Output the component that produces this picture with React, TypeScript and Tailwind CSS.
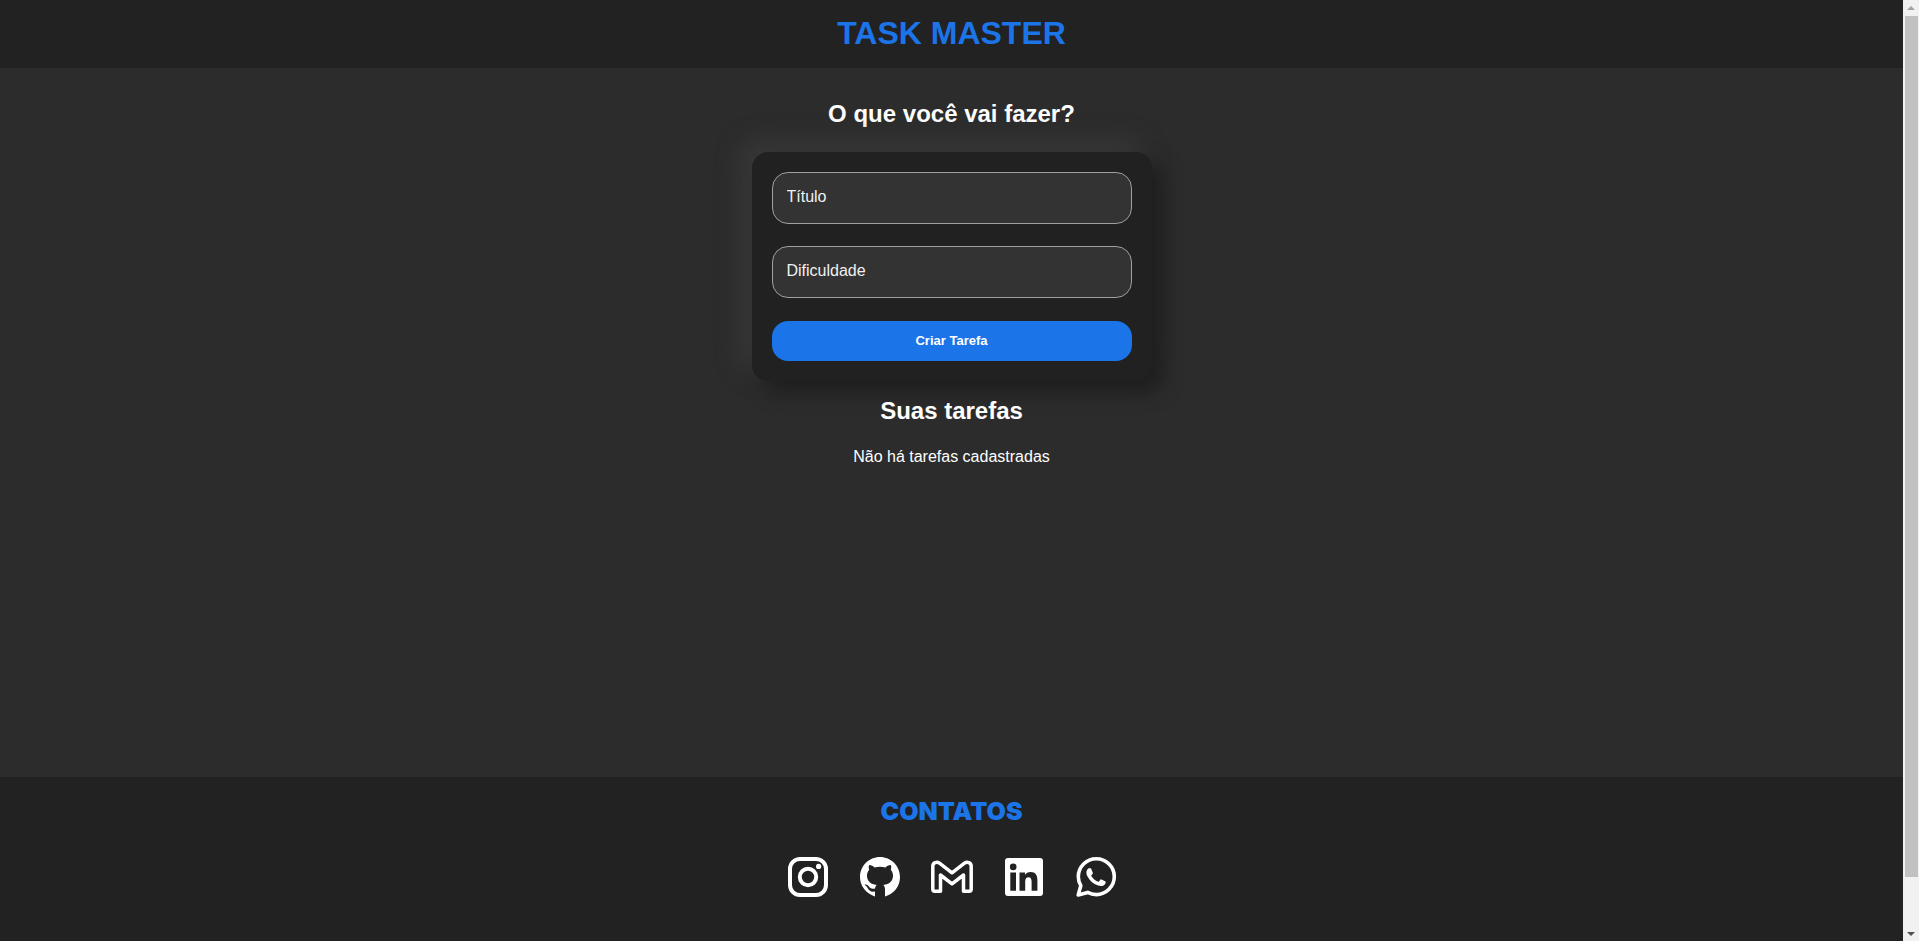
import { useState } from "react";
import type { FormEvent, ReactNode } from "react";

function Icon({ children }: { children: ReactNode }) {
  return (
    <svg viewBox="0 0 48 48" className="size-12" fill="none" aria-hidden="true">
      {children}
    </svg>
  );
}

const contacts = [
  {
    name: "Instagram",
    icon: (
      <Icon>
        <rect x="6" y="6" width="36" height="36" rx="10" stroke="currentColor" strokeWidth="4" />
        <circle cx="24" cy="24" r="8.200" stroke="currentColor" strokeWidth="4" />
        <circle cx="34.600" cy="13.400" r="2.600" fill="currentColor" />
      </Icon>
    ),
  },
  {
    name: "GitHub",
    icon: (
      <Icon>
        <path
          fill="currentColor"
          d="M24 4C12.950 4 4 12.950 4 24C4 32.900 9.700 40.300 18.800 43.400L19 43.400V38.600C14.500 39.200 12.900 37.200 11.700 35C10.900 33.500 9.600 32.600 8.600 31.800C9.900 31 11.700 31.800 12.700 33.200C14 35.100 15.400 36.300 19.100 35.500C19.200 34 19.800 32.700 20.700 32C14.500 31.200 11 28.300 11 22.500C11 20.300 11.800 18.300 13.200 16.700C12.600 15.200 12.600 13.400 13.200 12C15.500 12 17.200 13.200 18.500 14.400C22 13.400 26 13.400 29.500 14.400C30.800 13.200 32.500 12 34.800 12C35.400 13.400 35.400 15.200 34.800 16.700C36.200 18.300 37 20.300 37 22.500C37 28.300 33.500 31.200 27.300 32C28.400 33 29 34.600 29 36.300V43.400C37.700 41.200 44 33.400 44 24C44 12.950 35.050 4 24 4Z"
        />
      </Icon>
    ),
  },
  {
    name: "Gmail",
    icon: (
      <Icon>
        <path
          stroke="currentColor"
          strokeWidth="3.500"
          strokeLinejoin="round"
          d="M4.800 36V13.200C4.800 9.500 8.800 8.200 11.500 10.200L24 19.800L36.500 10.200C39.200 8.200 43.200 9.500 43.200 13.200V36C43.200 37.400 42.500 38.200 41.200 38.200H35.500V22L24 30.800L12.500 22V38.200H6.800C5.500 38.200 4.800 37.400 4.800 36Z"
        />
      </Icon>
    ),
  },
  {
    name: "LinkedIn",
    icon: (
      <Icon>
        <path
          fill="currentColor"
          fillRule="evenodd"
          d="M8 5H40A3 3 0 0 1 43 8V40A3 3 0 0 1 40 43H8A3 3 0 0 1 5 40V8A3 3 0 0 1 8 5ZM13.200 10.600A3.300 3.300 0 1 0 13.200 17.200A3.300 3.300 0 1 0 13.200 10.600ZM10.300 19.500V37.800H16V19.500ZM19.500 19.500V37.800H25.200V28.500C25.200 26 26.200 24.300 28.500 24.300C30.900 24.300 31.600 26.200 31.600 28.700V37.800H37.400V27.500C37.400 22.300 35.600 19 30.600 19C28 19 26 20.200 25 22V19.500Z"
        />
      </Icon>
    ),
  },
  {
    name: "WhatsApp",
    icon: (
      <Icon>
        <path
          stroke="currentColor"
          strokeWidth="3.600"
          strokeLinejoin="round"
          d="M24.300 5.700C14.400 5.700 6.300 13.700 6.300 23.600C6.300 26.900 7.200 30 8.800 32.700L6.200 42L15.700 39.400C18.300 40.800 21.200 41.600 24.300 41.600C34.200 41.600 42.300 33.500 42.300 23.600C42.300 13.700 34.200 5.700 24.300 5.700Z"
        />
        <path
          fill="currentColor"
          d="M19.268 16.045c-.355-.79-.729-.806-1.068-.82-.277-.012-.593-.011-.909-.011s-.83.119-1.265.594c-.435.475-1.661 1.622-1.661 3.956s1.700 4.590 1.937 4.906c.237.316 3.282 5.259 8.104 7.161 4.007 1.580 4.823 1.266 5.693 1.187.870-.079 2.807-1.147 3.202-2.255.395-1.108.395-2.057.277-2.255-.119-.198-.435-.316-.909-.554s-2.807-1.385-3.242-1.543c-.435-.158-.751-.237-1.068.238-.316.474-1.225 1.543-1.502 1.859-.277.317-.554.357-1.028.119-.474-.238-2.002-.738-3.815-2.354-1.410-1.257-2.362-2.810-2.639-3.285-.277-.474-.030-.731.208-.968.213-.213.474-.554.712-.831.237-.277.316-.475.474-.791.158-.317.079-.594-.040-.831-.117-.238-1.039-2.584-1.461-3.522z"
        />
      </Icon>
    ),
  },
];

const fields = [
  { id: "title", label: "Título" },
  { id: "difficulty", label: "Dificuldade" },
];

export default function App() {
  const [tasks, setTasks] = useState<string[]>([]);
  const submit = (event: FormEvent<HTMLFormElement>) => {
    event.preventDefault();
    const title = String(new FormData(event.currentTarget).get("title") ?? "");
    if (title) setTasks([...tasks, title]);
  };

  return (
    <div className="flex min-h-screen bg-[#2c2c2c] font-['Liberation_Sans',Arial,sans-serif] text-white">
      <div className="flex grow flex-col">
        <header className="bg-[#222222] pt-[13px] pb-[15px] text-center">
          <h1 className="text-[32px] leading-10 font-bold text-[#1b74e8]">TASK MASTER</h1>
        </header>
        <main className="flex grow flex-col items-center pt-8">
          <h2 className="text-2xl leading-7 font-bold">O que você vai fazer?</h2>
          <form
            onSubmit={submit}
            className="mt-6 flex w-full max-w-[400px] flex-col gap-[22px] rounded-2xl bg-[#212121] p-5 shadow-[10px_10px_20px_#1d1d1d,-10px_-10px_24px_#3b3b3b]"
          >
            {fields.map((field) => (
              <input
                key={field.id}
                id={field.id}
                name={field.id}
                aria-label={field.label}
                placeholder={field.label}
                className="h-[52px] w-full rounded-2xl border border-[#a0a0a0] bg-[#333333] px-3.5 pb-0.5 text-base outline-none placeholder:text-[#f0f0f0]"
              />
            ))}
            <button type="submit" className="mt-px h-10 rounded-2xl bg-[#1b74e8] text-[13px] font-bold">
              Criar Tarefa
            </button>
          </form>
          <h2 className="mt-4 text-2xl leading-7 font-bold">Suas tarefas</h2>
          {tasks.length === 0 ? (
            <p className="mt-5 text-base">Não há tarefas cadastradas</p>
          ) : (
            <ul className="mt-5">
              {tasks.map((task, i) => (
                <li key={i}>{task}</li>
              ))}
            </ul>
          )}
        </main>
        <footer className="bg-[#222222] pt-5 pb-10 text-center">
          <h2 className="font-['Arial_Black','Inter',sans-serif] text-[25px] leading-7 font-black text-[#1b74e8]">CONTATOS</h2>
          <nav aria-label="Contatos" className="mt-7 flex justify-center gap-6">
            {contacts.map((contact) => (
              <a key={contact.name} href="#" aria-label={contact.name}>
                {contact.icon}
              </a>
            ))}
          </nav>
        </footer>
      </div>
      <div aria-hidden="true" className="flex w-4 shrink-0 flex-col items-center bg-[#f1f1f1]">
        <svg viewBox="0 0 16 16" className="size-4">
          <path d="M4 10L8 6L12 10Z" fill="#a3a3a3" />
        </svg>
        <div className="flex grow flex-col self-stretch pr-px pl-0.5">
          <div className="basis-[94.7%] bg-[#c1c1c1]" />
        </div>
        <svg viewBox="0 0 16 16" className="size-4">
          <path d="M4 7L8 11L12 7Z" fill="#505050" />
        </svg>
      </div>
    </div>
  );
}
